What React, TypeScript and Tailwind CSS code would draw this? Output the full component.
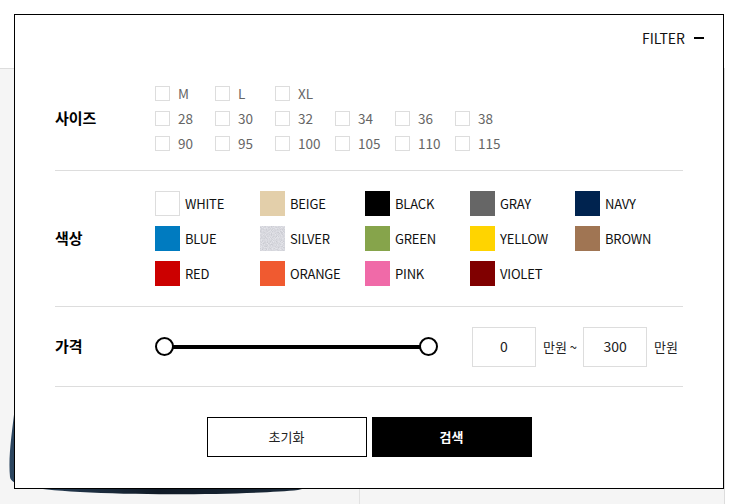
const sizeRows: (string | null)[][] = [
  ["M", "L", "XL", null, null, null],
  ["28", "30", "32", "34", "36", "38"],
  ["90", "95", "100", "105", "110", "115"],
];

const colors = [
  { name: "WHITE", cls: "bg-white border border-[#dddddd]" },
  { name: "BEIGE", cls: "bg-[#e3cfaa]" },
  { name: "BLACK", cls: "bg-black" },
  { name: "GRAY", cls: "bg-[#666666]" },
  { name: "NAVY", cls: "bg-[#00234f]" },
  { name: "BLUE", cls: "bg-[#007bc0]" },
  { name: "SILVER", cls: "silver" },
  { name: "GREEN", cls: "bg-[#86a44b]" },
  { name: "YELLOW", cls: "bg-[#ffd400]" },
  { name: "BROWN", cls: "bg-[#a07553]" },
  { name: "RED", cls: "bg-[#cc0000]" },
  { name: "ORANGE", cls: "bg-[#f05a30]" },
  { name: "PINK", cls: "bg-[#f06aa8]" },
  { name: "VIOLET", cls: "bg-[#800000]" },
];

function SilverSwatch() {
  return (
    <svg width="25" height="25" viewBox="0 0 25 25" className="block">
      <filter id="glitter">
        <feTurbulence type="fractalNoise" baseFrequency="1.2" numOctaves="2" seed="3" />
        <feColorMatrix
          type="matrix"
          values="0 0 0 0 0.86  0 0 0 0 0.86  0 0 0 0 0.9  0 0 0 -1.4 1.1"
        />
      </filter>
      <rect width="25" height="25" fill="#c9cad1" />
      <rect width="25" height="25" filter="url(#glitter)" />
    </svg>
  );
}

function Swatch({ cls }: { cls: string }) {
  if (cls === "silver") return <SilverSwatch />;
  return <span className={`block h-[25px] w-[25px] ${cls}`} />;
}

function Knob() {
  return <span className="block h-[19px] w-[19px] rounded-full border-2 border-black bg-white" />;
}

export default function App() {
  return (
    <div className="relative h-[504px] w-[735px] overflow-hidden bg-white font-['Noto_Sans_CJK_KR',sans-serif]">
      {/* page behind the filter */}
      <div className="h-[68px]" />
      <div className="flex h-[436px] w-[725px] border-t border-r border-[#dddddd] bg-[#f5f5f5]">
        <div className="relative w-[360px] border-r border-[#e2e2e2]">
          <svg className="absolute inset-0" width="359" height="436" viewBox="0 68 359 436">
            <defs>
              <linearGradient id="cloth" x1="0" y1="0" x2="1" y2="0">
                <stop offset="0" stopColor="#2c4660" />
                <stop offset="0.5" stopColor="#101a26" />
                <stop offset="1" stopColor="#1a2a3a" />
              </linearGradient>
            </defs>
            <path
              d="M15 405 C 12 432, 8 456, 10 476 C 11 484, 28 488, 80 491 C 150 495, 260 493, 298 489 L 306 487 L 306 470 L 15 405 Z"
              fill="url(#cloth)"
            />
          </svg>
        </div>
        <div className="flex-1" />
      </div>

      {/* filter panel */}
      <div className="absolute left-[14px] top-[14px] flex h-[475px] w-[710px] flex-col border border-black bg-white">
        <div className="flex h-[46px] items-center justify-end pr-[19px]">
          <span className="text-[14px] text-[#111111]">FILTER</span>
          <span className="ml-[9px] block h-[2px] w-[10px] bg-black" />
        </div>

        <div className="mx-[40px] flex flex-col">
          {/* sizes */}
          <div className="flex items-center border-b border-[#dddddd] pt-[25px] pb-[19px]">
            <div className="w-[100px] text-[15px] font-bold text-black">사이즈</div>
            <div className="flex flex-col gap-[10px]">
              {sizeRows.map((row, i) => (
                <div key={i} className="flex">
                  {row.map((s, j) => (
                    <div key={j} className="flex w-[60px] items-center">
                      {s && (
                        <>
                          <span className="block h-[15px] w-[15px] border border-[#dddddd] bg-white" />
                          <span className="ml-[8px] text-[13.5px] leading-[15px] text-[#666666]">{s}</span>
                        </>
                      )}
                    </div>
                  ))}
                </div>
              ))}
            </div>
          </div>

          {/* colours */}
          <div className="flex items-center border-b border-[#dddddd] pt-[20px] pb-[20px]">
            <div className="w-[100px] text-[15px] font-bold text-black">색상</div>
            <div className="grid grid-cols-[repeat(5,105px)] gap-y-[10px]">
              {colors.map((c) => (
                <div key={c.name} className="flex h-[25px] items-center">
                  <Swatch cls={c.cls} />
                  <span className="ml-[5px] text-[13px] tracking-[-0.2px] text-[#111111]">{c.name}</span>
                </div>
              ))}
            </div>
          </div>

          {/* price */}
          <div className="flex h-[80px] items-center border-b border-[#dddddd]">
            <div className="w-[100px] text-[15px] font-bold text-black">가격</div>
            <div className="relative flex w-[283px] items-center justify-between">
              <span className="absolute left-[9px] right-[9px] top-1/2 h-[4px] -translate-y-1/2 bg-black" />
              <span className="relative">
                <Knob />
              </span>
              <span className="relative">
                <Knob />
              </span>
            </div>
            <div className="ml-[34px] flex items-center text-[13px] text-[#222222]">
              <span className="flex h-[40px] w-[64px] items-center justify-center border border-[#dddddd] text-[14px]">0</span>
              <span className="ml-[7px] mr-[6px]">만원 ~</span>
              <span className="flex h-[40px] w-[64px] items-center justify-center border border-[#dddddd] text-[14px]">300</span>
              <span className="ml-[7px]">만원</span>
            </div>
          </div>
        </div>

        <div className="mt-[30px] flex justify-center gap-[5px] text-[13px]">
          <button className="h-[40px] w-[160px] border border-black bg-white text-[#222222]">초기화</button>
          <button className="h-[40px] w-[160px] bg-black font-bold text-white">검색</button>
        </div>
      </div>
    </div>
  );
}
